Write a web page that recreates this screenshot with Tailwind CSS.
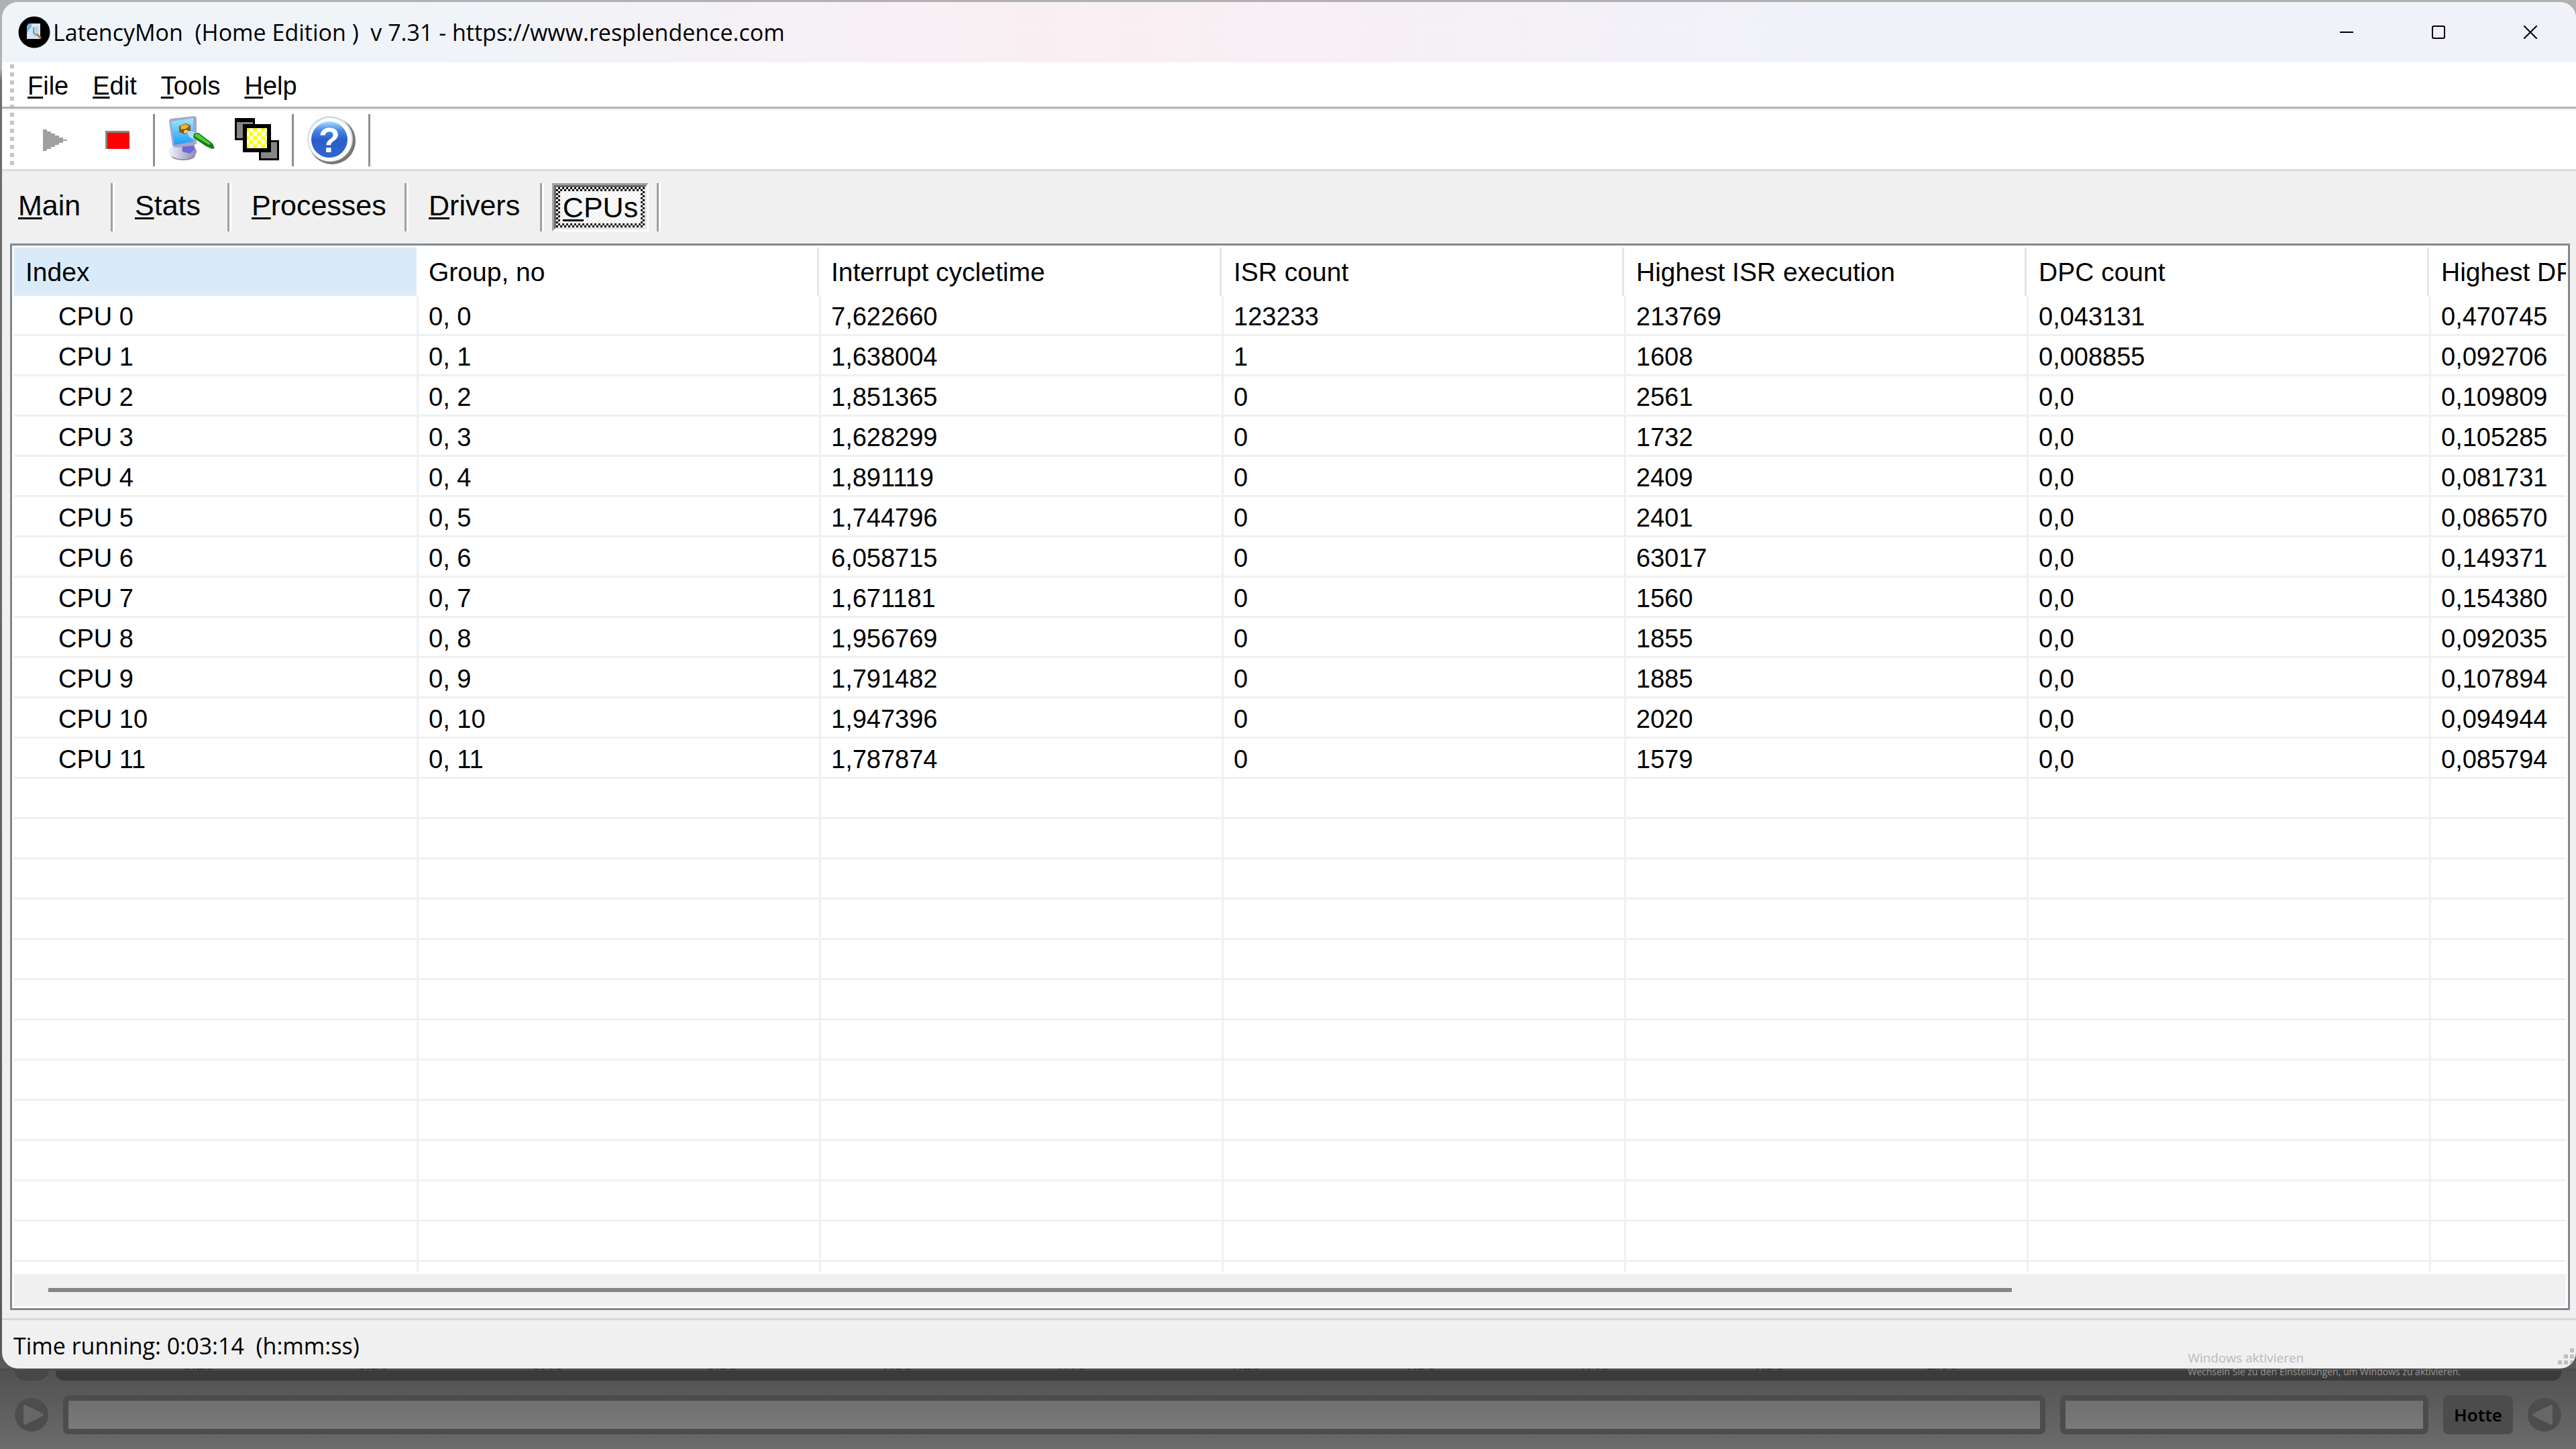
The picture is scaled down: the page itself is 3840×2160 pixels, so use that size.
<!DOCTYPE html>
<html lang="de">
  <head>
    <meta charset="UTF-8" />
    <meta name="viewport" content="width=device-width, initial-scale=1.0" />
    <title>LatencyMon</title>
    <script src="https://cdn.jsdelivr.net/npm/@tailwindcss/browser@4"></script>
  </head>
  <body
    class="relative flex h-screen flex-col overflow-hidden bg-[#6b6b6b] font-['Liberation_Sans',sans-serif] text-[38px] text-black"
  >
    <div
      class="flex min-h-0 flex-1 flex-col bg-linear-to-b from-[#b1b1b1] from-5% via-[#6e6e6e] via-6% to-[#5a5a5a] pt-[3px] pl-[3px]"
    >
      <main
        class="flex min-h-0 flex-1 flex-col overflow-hidden rounded-3xl bg-[#f0f0f0]"
      >
        <!-- Title bar -->
        <header
          class="flex h-[90px] shrink-0 items-center bg-linear-to-r from-[#eff4f9] from-15% via-[#faeff3] via-42% to-[#f1f2f9] to-70% pl-6"
        >
          <svg class="size-12 shrink-0" viewBox="0 0 48 48">
            <circle cx="24" cy="24" r="23.5" fill="#000" />
            <path d="M16 11h17v23H13V15z" fill="#d3e6f7" />
            <path d="M13 15l3-4h4v5l-7 9z" fill="#7fb0e6" />
            <path d="M22 16h8v14h-8z" fill="#b5d9d3" />
            <path d="M23 17v8l6 4" fill="none" stroke="#6f9f98" stroke-width="2" />
            <path d="M28 27l6 6" stroke="#c8743a" stroke-width="3" />
          </svg>
          <h1
            class="ml-1 flex-1 font-['Open_Sans',sans-serif] text-[34px] leading-[48px] whitespace-pre"
          >LatencyMon  (Home Edition )  v 7.31 - https://www.resplendence.com</h1>
          <button
            class="flex h-full w-[137px] items-center justify-center"
            aria-label="Minimize"
          >
            <svg class="size-5" viewBox="0 0 20 20">
              <path d="M0 10h20" stroke="#000" stroke-width="2" />
            </svg>
          </button>
          <button
            class="flex h-full w-[137px] items-center justify-center"
            aria-label="Maximize"
          >
            <svg class="size-5" viewBox="0 0 20 20">
              <rect x="1" y="1" width="18" height="18" rx="2" fill="none" stroke="#000" stroke-width="2" />
            </svg>
          </button>
          <button
            class="flex h-full w-[137px] items-center justify-center"
            aria-label="Close"
          >
            <svg class="size-5" viewBox="0 0 20 20">
              <path d="M0 0l20 20M20 0L0 20" stroke="#000" stroke-width="2" />
            </svg>
          </button>
        </header>

        <!-- Menu -->
        <nav
          class="flex h-[72px] shrink-0 border-b-3 border-[#f0f5fb] bg-white"
        >
          <div class="flex flex-1 border-b-3 border-[#b3b3b3] pl-3">
            <div
              class="mt-[3px] w-[6px] bg-[repeating-linear-gradient(to_bottom,#c4c4c4_0,#c4c4c4_6px,#fff_6px,#fff_12px)]"
            ></div>
            <div class="flex pt-1 pl-[2px]">
              <button class="px-[18px]"><span class="underline decoration-[3px] underline-offset-[3px]">F</span>ile</button>
              <button class="px-[18px]"><span class="underline decoration-[3px] underline-offset-[3px]">E</span>dit</button>
              <button class="px-[18px]"><span class="underline decoration-[3px] underline-offset-[3px]">T</span>ools</button>
              <button class="px-[18px]"><span class="underline decoration-[3px] underline-offset-[3px]">H</span>elp</button>
            </div>
          </div>
        </nav>

        <!-- Toolbar -->
        <div
          class="flex h-[90px] shrink-0 items-center border-b-3 border-[#dcdcdc] bg-white pl-3"
        >
          <div
            class="mt-[3px] h-[84px] w-[6px] bg-[repeating-linear-gradient(to_bottom,#c4c4c4_0,#c4c4c4_6px,#fff_6px,#fff_12px)]"
          ></div>
          <button
            class="ml-[14px] flex h-full w-[93px] items-center justify-center"
            aria-label="Start"
          >
            <svg class="size-9" viewBox="0 0 36 36">
              <path d="M0 2h6v3h6v3h6v3h6v3h6v3h6v2h-6v3h-6v3h-6v3h-6v3H6v3H0z" fill="#a0a0a0" />
            </svg>
          </button>
          <button
            class="flex h-full w-[93px] items-center justify-center"
            aria-label="Stop"
          >
            <svg class="h-[27px] w-9" viewBox="0 0 36 27">
              <path d="M0 0h36v27H0z" fill="#868686" />
              <path d="M3 3h33v24H3z" fill="#f00" />
            </svg>
          </button>
          <span class="ml-[7px] h-[78px] w-[3px] bg-[#8f8f8f]"></span>
          <button
            class="ml-2 flex h-full w-24 items-center justify-center"
            aria-label="Options"
          >
            <svg class="size-[72px]" viewBox="0 0 72 72">
              <defs>
                <linearGradient id="screen" x1="0" y1="0" x2="0" y2="1">
                  <stop offset="0" stop-color="#9fe9ff" />
                  <stop offset="1" stop-color="#1a9cf5" />
                </linearGradient>
                <linearGradient id="base" x1="0" y1="0" x2="1" y2="0">
                  <stop offset="0" stop-color="#f6f6fb" />
                  <stop offset="1" stop-color="#8a8ab8" />
                </linearGradient>
              </defs>
              <ellipse cx="22" cy="59" rx="18" ry="7" fill="#8e8e98" />
              <ellipse cx="21" cy="53" rx="21" ry="11" fill="url(#base)" />
              <path d="M20 42l16-5 4 12-8 7-11-3z" fill="#7468cf" />
              <path d="M1 7l2-3L39 0l3 2v39l-4 3-28 3-4-3z" fill="#a7a6c9" />
              <path d="M4 8l33-5v35L9 43z" fill="url(#screen)" />
              <path d="M16 15l10-4 7 3v8l-9 5-8-3z" fill="#8c5a10" />
              <path d="M18 15l8-3 5 3-5 4-7 1z" fill="#f4b32c" />
              <path d="M24 21l5 0-2 4-4 1z" fill="#ffd166" />
              <path d="M27 22l11 1 5 4-5 8-7-4z" fill="#b4dcf4" />
              <path d="M38 26l7-1 21 16 3 7-4 1-9-4-19-13z" fill="#128018" />
              <path d="M40 27l5 0 18 14-2 2-22-13z" fill="#55cc3a" />
            </svg>
          </button>
          <button
            class="flex h-full w-24 items-center justify-center"
            aria-label="Always on top"
          >
            <svg class="size-[66px]" viewBox="0 0 66 66">
              <defs>
                <pattern id="dither" x="18" y="15" width="12" height="12" patternUnits="userSpaceOnUse">
                  <path d="M0 0h12v12H0z" fill="#ff0" />
                  <path d="M3 0h6v6H3zM0 6h3v6H0zM9 6h3v6H9z" fill="#fff" />
                </pattern>
              </defs>
              <path d="M0 0h30v33H0z" />
              <path d="M3 6h24v24H3z" fill="#868686" />
              <path d="M36 33h30v30H36z" />
              <path d="M39 36h24v24H39z" fill="#868686" />
              <path d="M12 9h42v42H12z" />
              <path d="M18 15h30v30H18z" fill="url(#dither)" />
            </svg>
          </button>
          <span class="ml-[4px] h-[78px] w-[3px] bg-[#8f8f8f]"></span>
          <button
            class="flex h-full w-[111px] items-center justify-center"
            aria-label="Help"
          >
            <svg class="size-[72px]" viewBox="0 0 72 72">
              <defs>
                <linearGradient id="help" x1="0" y1="0" x2="0" y2="1">
                  <stop offset="0" stop-color="#a8e0ff" />
                  <stop offset="0.25" stop-color="#4a86e6" />
                  <stop offset="0.5" stop-color="#2b5ecb" />
                  <stop offset="1" stop-color="#2f66d2" />
                </linearGradient>
              </defs>
              <circle cx="37" cy="37" r="35" fill="#7a7672" />
              <circle cx="34" cy="34" r="34" fill="#d5dbe6" />
              <circle cx="34" cy="35" r="32" fill="#fff" />
              <circle cx="33" cy="35" r="27" fill="url(#help)" />
              <text x="33" y="54" fill="#fff" font-size="52" font-weight="700" text-anchor="middle">?</text>
            </svg>
          </button>
          <span class="h-[78px] w-[3px] bg-[#8f8f8f]"></span>
        </div>

        <!-- Tabs -->
        <nav class="flex h-[108px] shrink-0 items-center text-[43px]">
          <button class="h-[72px] w-[162px] pb-[6px] pl-6 text-left"><span class="underline decoration-[3px] underline-offset-[3px]">M</span>ain</button>
          <span class="h-[72px] w-[6px] border-r-3 border-l-3 border-r-white border-l-[#a0a0a0]"></span>
          <button class="h-[72px] w-[168px] pb-[6px] pl-[30px] text-left"><span class="underline decoration-[3px] underline-offset-[3px]">S</span>tats</button>
          <span class="h-[72px] w-[6px] border-r-3 border-l-3 border-r-white border-l-[#a0a0a0]"></span>
          <button class="h-[72px] w-[258px] pb-[6px] pl-[30px] text-left"><span class="underline decoration-[3px] underline-offset-[3px]">P</span>rocesses</button>
          <span class="h-[72px] w-[6px] border-r-3 border-l-3 border-r-white border-l-[#a0a0a0]"></span>
          <button class="h-[72px] w-[196px] pb-[6px] pl-[30px] text-left"><span class="underline decoration-[3px] underline-offset-[3px]">D</span>rivers</button>
          <span class="h-[72px] w-[6px] border-r-3 border-l-3 border-r-white border-l-[#a0a0a0]"></span>
          <button
            class="mx-3 h-[72px] w-[144px] border-3 border-t-[#a0a0a0] border-r-white border-b-white border-l-[#a0a0a0]"
          >
            <span
              class="block h-full border-t-3 border-r-3 border-b-3 border-l-3 border-t-[#696969] border-r-[#e3e3e3] border-b-[#e3e3e3] border-l-[#696969]"
            >
              <span
                class="block h-full bg-[conic-gradient(#000_25%,#fff_0_50%,#000_0_75%,#fff_0)] bg-size-[6px_6px] p-[6px]"
              >
                <span
                  class="flex h-full items-center justify-center bg-[conic-gradient(#f0f0f0_25%,#fff_0_50%,#f0f0f0_0_75%,#fff_0)] bg-size-[6px_6px]"
                >
                  <span><span class="underline decoration-[3px] underline-offset-[3px]">C</span>PUs</span>
                </span>
              </span>
            </span>
          </button>
          <span class="h-[72px] w-[6px] border-r-3 border-l-3 border-r-white border-l-[#a0a0a0]"></span>
        </nav>

        <!-- CPU list -->
        <section
          class="mr-[9px] mb-3 ml-3 flex min-h-0 flex-1 flex-col border-3 border-[#828790] bg-white p-[3px]"
        >
          <div class="min-h-0 flex-1 overflow-hidden">
            <table
              class="w-[4203px] table-fixed border-separate border-spacing-0 text-left whitespace-nowrap"
            >
              <thead class="text-[39px]">
                <tr id="columns"></tr>
              </thead>
              <tbody id="rows"></tbody>
            </table>
          </div>
          <div
            class="mt-[3px] flex h-12 shrink-0 items-center bg-[#f0f0f0] pl-[51px]"
          >
            <div class="h-[6px] w-[78%] bg-[#868686]"></div>
          </div>
        </section>

        <!-- Status bar -->
        <footer
          class="relative flex h-[75px] shrink-0 items-center border-t-3 border-[#d7d7d7] pt-1 pl-[17px] font-['Open_Sans',sans-serif] text-[34px]"
        >
          <p class="whitespace-pre">Time running: 0:03:14  (h:mm:ss)</p>
          <svg class="absolute right-[3px] bottom-[6px] size-6" viewBox="0 0 24 24">
            <path d="M18 0h6v6h-6zM9 9h6v6H9zM18 9h6v6h-6zM0 18h6v6H0zM9 18h6v6H9zM18 18h6v6h-6z" fill="#bfbfbf" />
          </svg>
        </footer>
      </main>
    </div>

    <!-- Player behind the window -->
    <div
      class="shrink-0 bg-linear-to-b from-[#505050] to-[#6c6c6c] font-['Noto_Sans',sans-serif]"
    >
      <div class="h-[3px] overflow-hidden bg-[#4e4e4e] pl-[272px]">
        <div
          id="timeline"
          class="-mt-[19px] flex text-[24px] leading-[24px] font-semibold text-[#363636]"
        ></div>
      </div>
      <div class="flex h-[15px] px-[22px]">
        <div class="h-full w-[50px] rounded-b-full bg-[#474747]"></div>
        <div class="ml-[11px] flex-1 rounded-b-xl bg-[#3b3b3b]"></div>
      </div>
      <div class="flex items-center gap-[22px] px-[22px] py-[22px]">
        <button aria-label="Play">
          <svg class="size-[50px]" viewBox="0 0 50 50">
            <circle cx="25" cy="25" r="25" fill="#4d4d4d" />
            <path d="M15 12v26l26-13z" fill="#676767" stroke="#676767" stroke-width="4" stroke-linejoin="round" />
          </svg>
        </button>
        <input
          type="text"
          aria-label="Position"
          class="h-[58px] min-w-0 flex-1 rounded-lg border-8 border-[#4c4c4c] bg-linear-to-b from-[#6f6f6f] to-[#7a7a7a]"
        />
        <input
          type="text"
          aria-label="Search"
          class="h-[58px] w-[549px] rounded-lg border-8 border-[#4c4c4c] bg-linear-to-b from-[#6f6f6f] to-[#7a7a7a]"
        />
        <button
          class="h-[58px] w-[104px] rounded-lg bg-[#4c4c4c] text-[26px] font-semibold"
        >
          Hotte
        </button>
        <button aria-label="Back">
          <svg class="size-[50px]" viewBox="0 0 50 50">
            <circle cx="25" cy="25" r="25" fill="#4d4d4d" />
            <path d="M35 12v26L9 25z" fill="#676767" stroke="#676767" stroke-width="4" stroke-linejoin="round" />
          </svg>
        </button>
      </div>
    </div>

    <!-- Activation watermark -->
    <div
      class="pointer-events-none absolute right-[172px] bottom-[106px] font-['Open_Sans',sans-serif] whitespace-nowrap"
    >
      <p class="text-[19px] leading-[24px] text-[#bababa]">Windows aktivieren</p>
      <p class="text-[14px] leading-[18px] text-[#989898]">
        Wechseln Sie zu den Einstellungen, um Windows zu aktivieren.
      </p>
    </div>

    <script>
      const columns = [
        'Index',
        'Group, no',
        'Interrupt cycletime',
        'ISR count',
        'Highest ISR execution',
        'DPC count',
        'Highest DPC execution',
      ]

      const cpus = [
        ['7,622660', '123233', '213769', '0,043131', '0,470745'],
        ['1,638004', '1', '1608', '0,008855', '0,092706'],
        ['1,851365', '0', '2561', '0,0', '0,109809'],
        ['1,628299', '0', '1732', '0,0', '0,105285'],
        ['1,891119', '0', '2409', '0,0', '0,081731'],
        ['1,744796', '0', '2401', '0,0', '0,086570'],
        ['6,058715', '0', '63017', '0,0', '0,149371'],
        ['1,671181', '0', '1560', '0,0', '0,154380'],
        ['1,956769', '0', '1855', '0,0', '0,092035'],
        ['1,791482', '0', '1885', '0,0', '0,107894'],
        ['1,947396', '0', '2020', '0,0', '0,094944'],
        ['1,787874', '0', '1579', '0,0', '0,085794'],
      ]

      // The grid goes on below the last CPU
      const ROW_COUNT = 25

      document.getElementById('columns').innerHTML = columns
        .map((name, i) =>
          i === 0
            ? `<th class="w-[603px] p-0 font-normal"><div class="mr-[3px] h-[72px] bg-[#d9ebf9] pt-[3px] pl-[17px] leading-[68px]">${name}</div></th>`
            : `<th class="w-[600px] p-0 font-normal"><div class="mr-[3px] h-[72px] border-r-3 border-[#e5e5e5] pt-[3px] pl-[15px] leading-[68px]">${name}</div></th>`
        )
        .join('')

      const cell = (text) =>
        `<td class="h-[60px] border-r-3 border-b-3 border-[#f0f0f0] pt-[6px] pb-0 pl-[15px] leading-[51px]">${text}</td>`

      let html = ''
      for (let i = 0; i < ROW_COUNT; i++) {
        const cpu = cpus[i]
        const values = cpu ? [`0, ${i}`, ...cpu] : ['', '', '', '', '', '']
        html += `<tr><td class="h-[60px] border-r-3 border-b-3 border-[#f0f0f0] pt-[6px] pb-0 pl-[66px] leading-[51px]">${cpu ? `CPU ${i}` : ''}</td>${values.map(cell).join('')}</tr>`
      }
      document.getElementById('rows').innerHTML = html

      const times = ['0:20', '0:30', '0:40', '0:50', '1:00', '1:10', '1:20', '1:30', '1:40', '1:50', '2:00']
      document.getElementById('timeline').innerHTML = times
        .map((time) => `<span class="w-[260px]">${time}</span>`)
        .join('')
    </script>
  </body>
</html>
